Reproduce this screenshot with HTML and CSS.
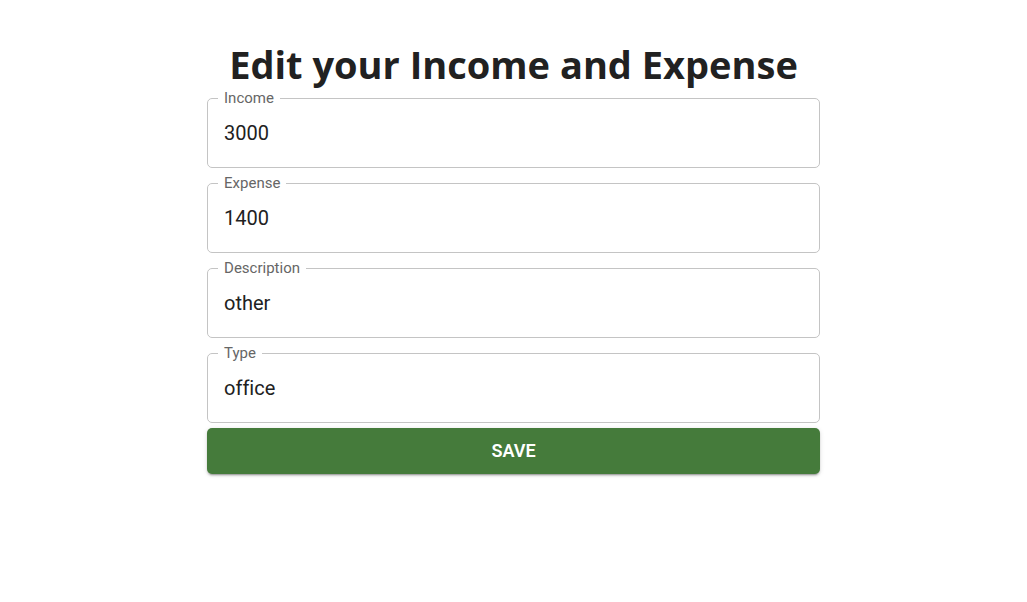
FILE: index.html
```html
<!DOCTYPE html>
<html lang="en">
<head>
<meta charset="utf-8">
<meta name="viewport" content="width=device-width, initial-scale=1">
<title>Edit your Income and Expense</title>
<link rel="stylesheet" href="styles.css">
</head>
<body>
<main class="page">
  <h1 class="title">Edit your Income and Expense</h1>
  <form class="form">
    <fieldset class="field">
      <legend class="field-legend"><label for="income">Income</label></legend>
      <input class="field-input" id="income" type="text" value="3000">
    </fieldset>
    <fieldset class="field">
      <legend class="field-legend"><label for="expense">Expense</label></legend>
      <input class="field-input" id="expense" type="text" value="1400">
    </fieldset>
    <fieldset class="field">
      <legend class="field-legend"><label for="description">Description</label></legend>
      <input class="field-input" id="description" type="text" value="other">
    </fieldset>
    <fieldset class="field">
      <legend class="field-legend"><label for="type">Type</label></legend>
      <input class="field-input" id="type" type="text" value="office">
    </fieldset>
    <button class="save" type="button">SAVE</button>
  </form>
</main>
</body>
</html>
```
FILE: styles.css
```css
* {
  box-sizing: border-box;
}

body {
  margin: 0;
  background: #fff;
  color: #212121;
  font-family: Roboto, "Liberation Sans", sans-serif;
}

.page {
  display: flex;
  flex-direction: column;
  align-items: center;
  padding: 40px 20px;
}

.title {
  margin: 0;
  font: 700 38px/48px "Open Sans", "Noto Sans", sans-serif;
  text-align: center;
}

.form {
  display: flex;
  flex-direction: column;
  gap: 5px;
  width: 62.1%;
}

.field {
  min-width: 0;
  margin: 0;
  padding: 0 10px;
  border: 1px solid #c4c4c4;
  border-radius: 5px;
}

.field-legend {
  padding: 0 6px;
  color: #666;
  font-size: 15px;
  line-height: 20px;
}

.field-input {
  display: block;
  width: 100%;
  height: 59px;
  padding: 0 6px 9px;
  border: 0;
  outline: 0;
  background: transparent;
  color: #212121;
  font: 400 20px/28px Roboto, "Liberation Sans", sans-serif;
  font-variant-ligatures: none;
}

.save {
  height: 46px;
  border: 0;
  border-radius: 5px;
  background: #457b3b;
  box-shadow: 0 3px 1px -2px rgba(0, 0, 0, 0.2), 0 2px 2px rgba(0, 0, 0, 0.14), 0 1px 5px rgba(0, 0, 0, 0.12);
  color: #fff;
  font: 600 18px/28px Roboto, "Liberation Sans", sans-serif;
}
```
